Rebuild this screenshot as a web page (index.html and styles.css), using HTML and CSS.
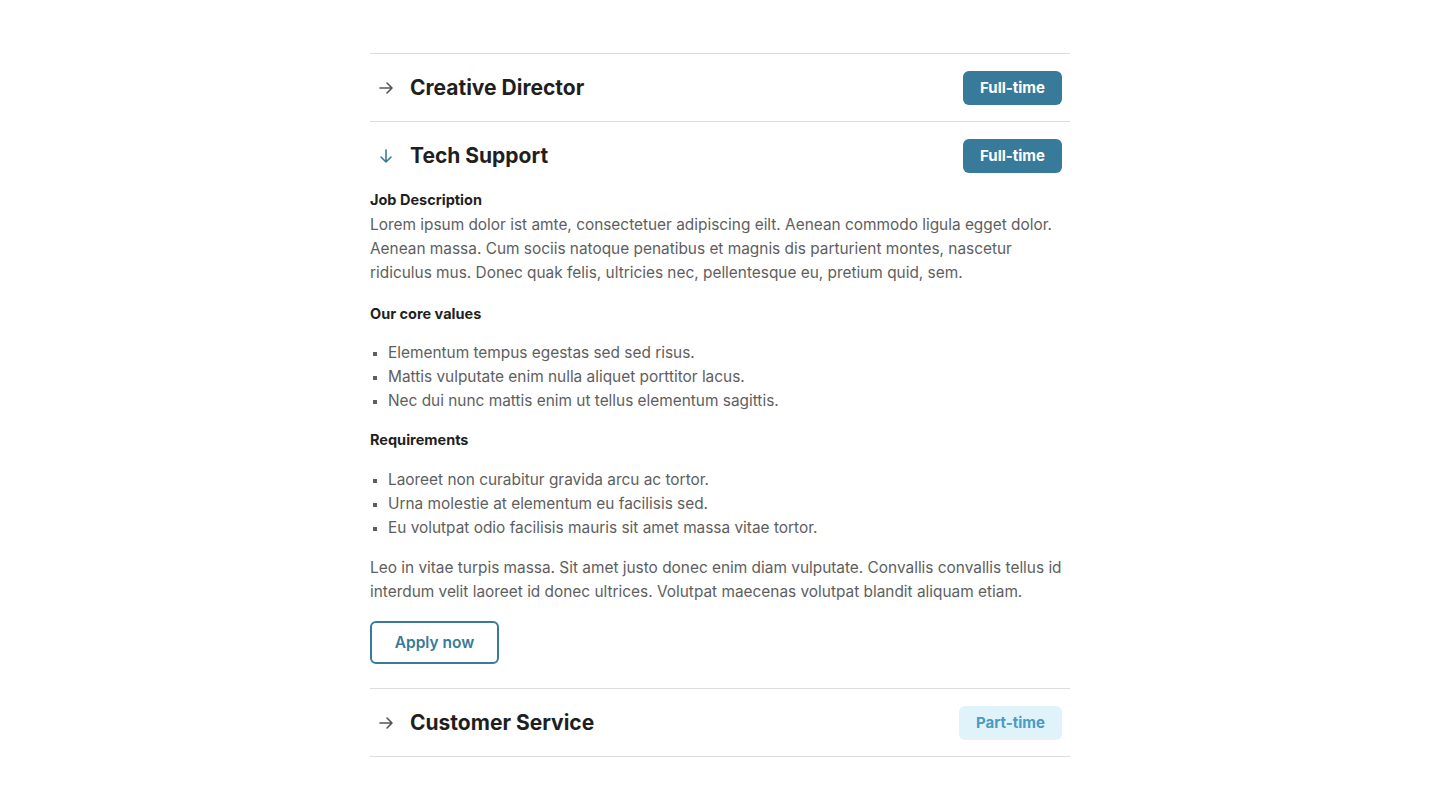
FILE: index.html
```html
<!DOCTYPE html>
<html>
	<head>
		<meta charset="utf-8" />
		<title>Careers</title>
		<link rel="stylesheet" href="styles.css">
	</head>
	<body>
		<div class="jobs">
			<div class="job">
				<div class="job-head">
					<svg class="arrow" viewBox="0 0 16 16" width="16" height="16"><path d="M2 8h12M9 3l5 5-5 5" /></svg>
					<h2 class="title">Creative Director</h2>
					<span class="badge full">Full-time</span>
				</div>
			</div>

			<div class="job open">
				<div class="job-head">
					<svg class="arrow" viewBox="0 0 16 16" width="16" height="16"><path d="M8 2v12M3 9l5 5 5-5" /></svg>
					<h2 class="title">Tech Support</h2>
					<span class="badge full">Full-time</span>
				</div>
				<div class="job-body">
					<h4 class="first">Job Description</h4>
					<p class="intro">Lorem ipsum dolor ist amte, consectetuer adipiscing eilt. Aenean commodo ligula egget dolor. Aenean massa. Cum sociis natoque penatibus et magnis dis parturient montes, nascetur ridiculus mus. Donec quak felis, ultricies nec, pellentesque eu, pretium quid, sem.</p>

					<h4 class="sub">Our core values</h4>
					<ul>
						<li>Elementum tempus egestas sed sed risus.</li>
						<li>Mattis vulputate enim nulla aliquet porttitor lacus.</li>
						<li>Nec dui nunc mattis enim ut tellus elementum sagittis.</li>
					</ul>

					<h4 class="sub">Requirements</h4>
					<ul class="reqs">
						<li>Laoreet non curabitur gravida arcu ac tortor.</li>
						<li>Urna molestie at elementum eu facilisis sed.</li>
						<li>Eu volutpat odio facilisis mauris sit amet massa vitae tortor.</li>
					</ul>

					<p class="outro">Leo in vitae turpis massa. Sit amet justo donec enim diam vulputate. Convallis convallis tellus id interdum velit laoreet id donec ultrices. Volutpat maecenas volutpat blandit aliquam etiam.</p>

					<button class="apply">Apply now</button>
				</div>
			</div>

			<div class="job">
				<div class="job-head">
					<svg class="arrow" viewBox="0 0 16 16" width="16" height="16"><path d="M2 8h12M9 3l5 5-5 5" /></svg>
					<h2 class="title">Customer Service</h2>
					<span class="badge part">Part-time</span>
				</div>
			</div>
		</div>
	</body>
</html>
```

FILE: styles.css
```css
* {
	margin: 0;
	padding: 0;
	box-sizing: border-box;
}

body {
	background: #ffffff;
	font-family: "Inter", "Noto Sans", sans-serif;
	color: #5e5e5e;
}

.jobs {
	width: 700px;
	margin: 53px auto 0;
	border-bottom: 1px solid #dcdcdc;
}

.job {
	border-top: 1px solid #dcdcdc;
}

.job-head {
	height: 67px;
	display: flex;
	align-items: center;
	padding: 0 8px;
}

.arrow {
	flex: none;
	margin-right: 16px;
	fill: none;
	stroke: #555555;
	stroke-width: 1.6;
	stroke-linecap: round;
	stroke-linejoin: round;
}

.open .arrow {
	stroke: #3a7a99;
}

.title {
	font-size: 21px;
	font-weight: 700;
	line-height: 26px;
	color: #1f1f1f;
}

.badge {
	margin-left: auto;
	height: 34px;
	line-height: 34px;
	padding: 0 17px;
	border-radius: 6px;
	font-size: 15px;
	font-weight: 700;
}

.full {
	background: #387a99;
	color: #ffffff;
}

.part {
	background: #e0f3fb;
	color: #4a9bc4;
}

/* 展开内容 */
.job-body {
	padding-bottom: 24px;
}

.job-body h4 {
	font-size: 14.5px;
	font-weight: 700;
	color: #1f1f1f;
	line-height: 24px;
}

.job-body h4.first {
	line-height: 22px;
}

.job-body p,
.job-body li {
	font-size: 15.4px;
	line-height: 24px;
}

.job-body .intro {
	margin-top: 2px;
}

.job-body .sub {
	margin-top: 15px;
}

.job-body p + .sub {
	margin-top: 17px;
}

.job-body ul {
	list-style: none;
	margin-top: 15px;
}

.job-body ul.reqs {
	margin-top: 16px;
}

.job-body li {
	position: relative;
	padding-left: 18px;
}

.job-body li::before {
	content: "";
	position: absolute;
	left: 3px;
	top: 11px;
	width: 4px;
	height: 4px;
	background: #5e5e5e;
}

.outro {
	margin-top: 16px;
}

.apply {
	display: block;
	margin-top: 17px;
	width: 129px;
	height: 43px;
	border: 2px solid #387a99;
	border-radius: 6px;
	background: #ffffff;
	color: #387a99;
	font-family: inherit;
	font-size: 15.5px;
	font-weight: 600;
}
```
